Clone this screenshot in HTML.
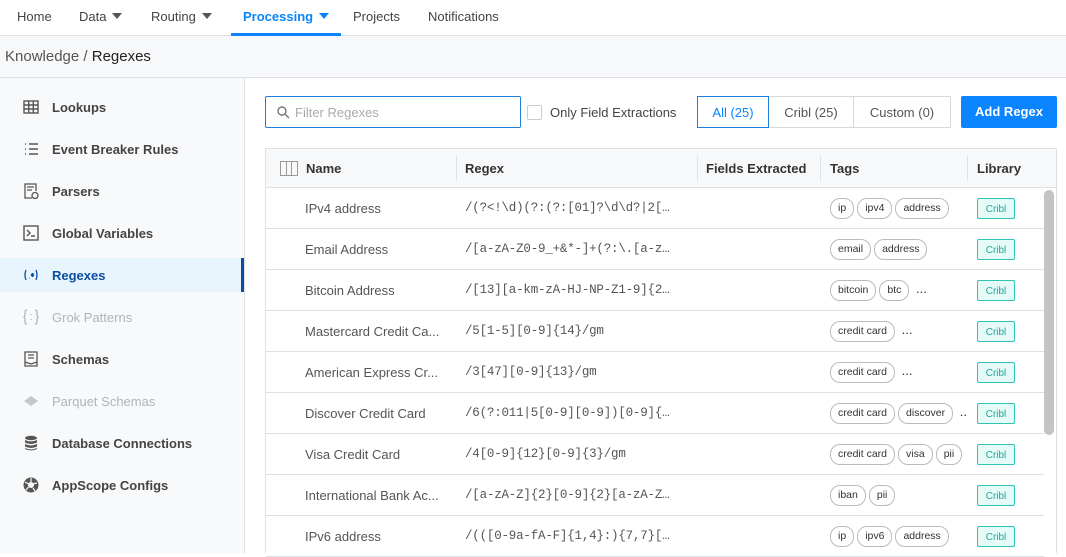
<!DOCTYPE html>
<html><head><meta charset="utf-8"><style>
*{box-sizing:border-box;margin:0;padding:0}
body{width:1066px;height:553px;overflow:hidden;background:#fff;font-family:"Liberation Sans",sans-serif;font-size:13px;color:#333;position:relative}
.nav{position:absolute;left:0;top:0;width:1066px;height:36px;border-bottom:1px solid #dde1e5;background:#fff}
.nav span{position:absolute;top:9px;font-size:13px;color:#444}
.tri{display:inline-block;width:0;height:0;border-left:5px solid transparent;border-right:5px solid transparent;border-top:6px solid #555;margin-left:6px;vertical-align:2px}
.crumb{position:absolute;top:36px;left:0;width:1066px;height:42px;background:#f7f8fa;border-bottom:1px solid #dde1e5;font-size:15px;padding:12px 0 0 5px;color:#555}
.side{position:absolute;top:78px;left:0;width:245px;height:475px;background:#f8f9fb;border-right:1px solid #dde1e5}
.si{position:absolute;left:0;width:244px;height:34px;font-size:13px;font-weight:bold;color:#444}
.si .t{position:absolute;left:52px;top:10px}
.si .ic{position:absolute;left:23px;top:9px;width:16px;height:16px}
.si.act{background:#e8f5fd;border-right:3px solid #0b4ea2;width:244px;color:#0b4ea2}
.si.dis{color:#b0b4b8;font-weight:normal}
.search{position:absolute;left:265px;top:96px;width:256px;height:32px;border:1px solid #1f7fd6;border-radius:2px;color:#aaa;padding:8px 0 0 29px}
.cb{position:absolute;left:527px;top:105px;width:15px;height:15px;border:1px solid #ccc;border-radius:2px}
.seg{position:absolute;top:96px;height:32px;border:1px solid #d5d9dd;text-align:center;padding-top:8px;color:#555}
.btn{position:absolute;left:961px;top:96px;width:96px;height:32px;background:#0a84ff;color:#fff;border-radius:2px;text-align:center;padding-top:8px;font-weight:bold}
.tbl{position:absolute;left:265px;top:148px;width:792px;height:405px;border:1px solid #dde1e5;border-bottom:none}
.hd{position:absolute;left:0;top:0;width:790px;height:39px;background:#f7f8fa;border-bottom:1px solid #dde1e5;font-weight:bold}
.hd span{position:absolute;top:12px}
.hd i{position:absolute;top:7px;height:25px;border-left:1px solid #dde1e5}
.row{position:absolute;left:0;width:778px;height:41px;border-bottom:1px solid #dde1e5}
.row .n{position:absolute;left:39px;top:13px;color:#555}
.row .r{position:absolute;left:199px;top:13px;font-family:"Liberation Mono",monospace;font-size:12.5px;color:#555;letter-spacing:-0.2px}
.tags{position:absolute;left:564px;top:10px;white-space:nowrap}
.tag{display:inline-block;border:1px solid #bbb;border-radius:10px;font-size:10.5px;padding:4px 7px;margin-right:3px;color:#333;line-height:11px}
.lib{position:absolute;left:711px;top:10px;width:38px;height:21px;border:1px solid #2ec4b6;background:#e6fbf8;color:#1aa89a;font-size:10px;text-align:center;padding-top:5px;border-radius:2px}
.sb{position:absolute;left:1044px;top:190px;width:10px;height:245px;background:#c4c4c4;border-radius:5px}
</style></head><body>
<div class="nav">
<span style="left:17px">Home</span>
<span style="left:79px">Data<i class="tri"></i></span>
<span style="left:151px">Routing<i class="tri"></i></span>
<span style="left:243px;color:#0a84ff;font-weight:bold">Processing<i class="tri" style="border-top-color:#0a84ff"></i></span>
<span style="left:353px">Projects</span>
<span style="left:428px">Notifications</span>
<div style="position:absolute;left:231px;top:33px;width:110px;height:3px;background:#0a84ff"></div>
</div>
<div class="crumb">Knowledge / <span style="color:#222">Regexes</span></div>
<div class="side">
<div class="si" style="top:12px"><svg class="ic" viewBox="0 0 16 16" fill="none" stroke="#555" stroke-width="1.4"><rect x="1" y="2" width="14" height="12"/><path d="M1 6h14M1 10h14M5.7 2v12M10.3 2v12"/></svg><span class="t">Lookups</span></div>
<div class="si" style="top:54px"><svg class="ic" viewBox="0 0 16 16" stroke="#555" stroke-width="1.4"><path d="M2 3h1M2 8h1M2 13h1M6 3h9M6 8h9M6 13h9"/></svg><span class="t">Event Breaker Rules</span></div>
<div class="si" style="top:96px"><svg class="ic" viewBox="0 0 16 16" fill="none" stroke="#555" stroke-width="1.3"><path d="M9 15H2V1h11v7M4 4h7M4 7h5"/><circle cx="12" cy="12.5" r="3"/></svg><span class="t">Parsers</span></div>
<div class="si" style="top:138px"><svg class="ic" viewBox="0 0 16 16" fill="none" stroke="#555" stroke-width="1.4"><rect x="1" y="1" width="14" height="14"/><path d="M4 5l3 3-3 3M8 11h4"/></svg><span class="t">Global Variables</span></div>
<div class="si act" style="top:180px"><svg class="ic" viewBox="0 0 16 16" fill="none" stroke="#0b4ea2" stroke-width="1.3"><path d="M3 3q-2 5 0 10M13 3q2 5 0 10M6 11h.5M9.5 6v4M8 7l3 2M11 7l-3 2"/></svg><span class="t">Regexes</span></div>
<div class="si dis" style="top:222px"><svg class="ic" viewBox="0 0 16 16" fill="none" stroke="#b0b4b8" stroke-width="1.3"><path d="M4 1q-2 0-2 2v3l-1 2 1 2v3q0 2 2 2M12 1q2 0 2 2v3l1 2-1 2v3q0 2-2 2M8 5v1M8 10v1"/></svg><span class="t">Grok Patterns</span></div>
<div class="si" style="top:264px"><svg class="ic" viewBox="0 0 16 16" fill="none" stroke="#555" stroke-width="1.3"><path d="M2 1h12v14H2zM5 4h6M5 7h6M2 11l6 2 6-2"/></svg><span class="t">Schemas</span></div>
<div class="si dis" style="top:306px"><svg class="ic" viewBox="0 0 16 16" fill="#c4c8cc"><path d="M8 3l7 5-7 5-7-5z"/></svg><span class="t">Parquet Schemas</span></div>
<div class="si" style="top:348px"><svg class="ic" viewBox="0 0 16 16" fill="#555"><ellipse cx="8" cy="3" rx="6" ry="2.2"/><path d="M2 5q6 3 12 0v2.5q-6 3-12 0zM2 9q6 3 12 0v2.5q-6 3-12 0zM2 13q6 3 12 0v1q-6 3-12 0z"/></svg><span class="t">Database Connections</span></div>
<div class="si" style="top:390px"><svg class="ic" viewBox="0 0 16 16"><circle cx="8" cy="8" r="7.5" fill="#555"/><circle cx="8" cy="8" r="3" fill="#f8f9fb"/><path d="M8 1v4M14 6l-4 1M12 14l-2-3M3 13l2.5-3M2 5l3.5 2" stroke="#f8f9fb" stroke-width="1.2"/></svg><span class="t">AppScope Configs</span></div>
</div>
<div class="search"><svg style="position:absolute;left:11px;top:9px" width="13" height="13" viewBox="0 0 13 13" fill="none" stroke="#777" stroke-width="1.4"><circle cx="5" cy="5" r="4"/><path d="M8 8l4 4"/></svg>Filter Regexes</div>
<div class="cb"></div>
<span style="position:absolute;left:550px;top:105px;color:#444">Only Field Extractions</span>
<div class="seg" style="left:697px;width:72px;border-color:#1f7fd6;color:#0a84ff;z-index:2">All (25)</div>
<div class="seg" style="left:768px;width:86px">Cribl (25)</div>
<div class="seg" style="left:853px;width:98px">Custom (0)</div>
<div class="btn">Add Regex</div>
<div class="tbl">
<div class="hd">
<svg style="position:absolute;left:14px;top:12px" width="18" height="15" viewBox="0 0 18 15" fill="none" stroke="#999" stroke-width="1"><rect x=".5" y=".5" width="17" height="14"/><path d="M6.5 .5v14M11.5 .5v14"/></svg>
<span style="left:40px">Name</span><i style="left:190px"></i>
<span style="left:199px">Regex</span><i style="left:431px"></i>
<span style="left:440px">Fields Extracted</span><i style="left:554px"></i>
<span style="left:564px">Tags</span><i style="left:701px"></i>
<span style="left:711px">Library</span>
</div>
<div class="row" style="top:39px"><span class="n">IPv4 address</span><span class="r">/(?&lt;!\d)(?:(?:[01]?\d\d?|2[…</span><div class="tags"><span class="tag">ip</span><span class="tag">ipv4</span><span class="tag">address</span></div><div class="lib">Cribl</div></div>
<div class="row" style="top:80px"><span class="n">Email Address</span><span class="r">/[a-zA-Z0-9_+&amp;*-]+(?:\.[a-z…</span><div class="tags"><span class="tag">email</span><span class="tag">address</span></div><div class="lib">Cribl</div></div>
<div class="row" style="top:121px"><span class="n">Bitcoin Address</span><span class="r">/[13][a-km-zA-HJ-NP-Z1-9]{2…</span><div class="tags"><span class="tag">bitcoin</span><span class="tag">btc</span> ...</div><div class="lib">Cribl</div></div>
<div class="row" style="top:162px"><span class="n">Mastercard Credit Ca...</span><span class="r">/5[1-5][0-9]{14}/gm</span><div class="tags"><span class="tag">credit card</span> ...</div><div class="lib">Cribl</div></div>
<div class="row" style="top:203px"><span class="n">American Express Cr...</span><span class="r">/3[47][0-9]{13}/gm</span><div class="tags"><span class="tag">credit card</span> ...</div><div class="lib">Cribl</div></div>
<div class="row" style="top:244px"><span class="n">Discover Credit Card</span><span class="r">/6(?:011|5[0-9][0-9])[0-9]{…</span><div class="tags"><span class="tag">credit card</span><span class="tag">discover</span> ..</div><div class="lib">Cribl</div></div>
<div class="row" style="top:285px"><span class="n">Visa Credit Card</span><span class="r">/4[0-9]{12}[0-9]{3}/gm</span><div class="tags"><span class="tag">credit card</span><span class="tag">visa</span><span class="tag">pii</span></div><div class="lib">Cribl</div></div>
<div class="row" style="top:326px"><span class="n">International Bank Ac...</span><span class="r">/[a-zA-Z]{2}[0-9]{2}[a-zA-Z…</span><div class="tags"><span class="tag">iban</span><span class="tag">pii</span></div><div class="lib">Cribl</div></div>
<div class="row" style="top:367px"><span class="n">IPv6 address</span><span class="r">/(([0-9a-fA-F]{1,4}:){7,7}[…</span><div class="tags"><span class="tag">ip</span><span class="tag">ipv6</span><span class="tag">address</span></div><div class="lib">Cribl</div></div>
</div>
<div class="sb"></div>
</body></html>
